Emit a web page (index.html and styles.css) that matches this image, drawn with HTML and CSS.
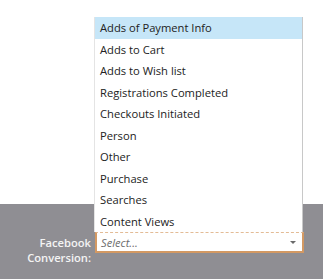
FILE: index.html
```html
<!DOCTYPE html>
<html>
<head>
    <title>Facebook Conversion</title>
    <link rel="stylesheet" href="styles.css">
</head>
<body>
    <div class="top"></div>
    <div class="panel">
        <div class="row">
            <label class="label" for="fbConversion">Facebook Conversion:</label>
            <div class="field">
                <ul class="options">
                    <li class="option active">Adds of Payment Info</li>
                    <li class="option">Adds to Cart</li>
                    <li class="option">Adds to Wish list</li>
                    <li class="option">Registrations Completed</li>
                    <li class="option">Checkouts Initiated</li>
                    <li class="option">Person</li>
                    <li class="option">Other</li>
                    <li class="option">Purchase</li>
                    <li class="option">Searches</li>
                    <li class="option">Content Views</li>
                </ul>
                <div class="select" id="fbConversion">
                    <span class="placeholder">Select...</span>
                    <span class="arrow"></span>
                </div>
            </div>
        </div>
    </div>
</body>
</html>
```

FILE: styles.css
```css
body {
    font-family: "Open Sans", Arial, sans-serif;
    font-size: 11.2px;
    background-color: #fff;
    margin: 0;
    padding: 0;
}
.top {
    height: 204px;
}
.panel {
    height: 75px;
    background-color: #8f8e93;
    padding-top: 28px;
    box-sizing: border-box;
}
.row {
    display: flex;
    align-items: flex-start;
}
.label {
    width: 91px;
    padding-top: 3px;
    text-align: right;
    color: #f4f4f4;
    font-weight: 600;
    line-height: 15px;
}
.field {
    position: relative;
    margin-left: 4px;
    width: 209px;
}
.select {
    height: 21px;
    box-sizing: border-box;
    background-color: #fff;
    border: 2px solid #d39963;
    border-top: 1px dashed #e3bb95;
    display: flex;
    align-items: center;
    padding: 0 6px 0 4px;
}
.placeholder {
    flex: 1;
    color: #6d6d6d;
    font-style: italic;
}
.arrow {
    width: 0;
    height: 0;
    border-left: 3.5px solid transparent;
    border-right: 3.5px solid transparent;
    border-top: 3.5px solid #6a6a6a;
}
.options {
    position: absolute;
    left: -1px;
    bottom: 100%;
    width: 209px;
    margin: 0;
    padding: 0;
    list-style: none;
    background-color: #fff;
    border-left: 1px solid #e4e4e4;
    border-right: 1px solid #c8c8c8;
    box-sizing: border-box;
}
.option {
    height: 21.5px;
    line-height: 21.5px;
    padding-left: 5px;
    color: #222;
    white-space: nowrap;
}
.option.active {
    background-color: #c6e6f8;
}
```
